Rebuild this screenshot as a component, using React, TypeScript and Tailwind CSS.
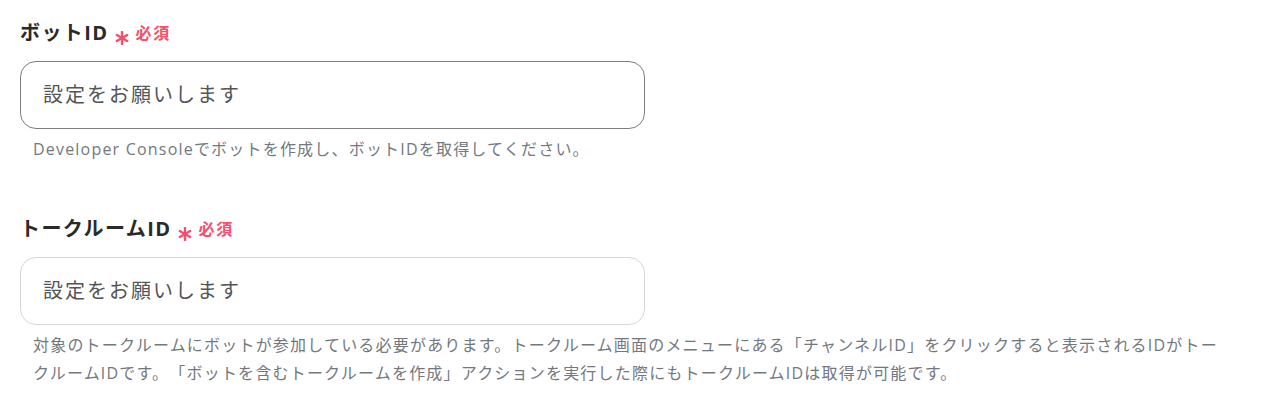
import React from "react";

const fields = [
  {
    id: "bot",
    label: "ボットID",
    active: true,
    help: "Developer Consoleでボットを作成し、ボットIDを取得してください。",
  },
  {
    id: "room",
    label: "トークルームID",
    active: false,
    help: "対象のトークルームにボットが参加している必要があります。トークルーム画面のメニューにある「チャンネルID」をクリックすると表示されるIDがトークルームIDです。「ボットを含むトークルームを作成」アクションを実行した際にもトークルームIDは取得が可能です。",
  },
];

const Asterisk = () => (
  <svg width="14" height="14" viewBox="0 0 14 14" className="mt-[9px] shrink-0">
    <g stroke="#f2506b" strokeWidth="2.4" strokeLinecap="round">
      <line x1="7" y1="1" x2="7" y2="13" />
      <line x1="1.8" y1="4" x2="12.2" y2="10" />
      <line x1="1.8" y1="10" x2="12.2" y2="4" />
    </g>
  </svg>
);

export default function App() {
  return (
    <div className="w-[1281px] h-[418px] bg-white px-5 pt-[18px] font-['Open_Sans','Noto_Sans_CJK_JP',sans-serif] [text-spacing-trim:space-all]">
      {fields.map((f, i) => (
        <section key={f.id} className={i > 0 ? "mt-[51px]" : ""}>
          <div className="h-[30px] flex items-center">
            <span className="text-[20px] font-bold text-[#2a2a2a] leading-none tracking-[0.07em]">
              {f.label}
            </span>
            <span className="ml-[7px]">
              <Asterisk />
            </span>
            <span className="ml-[6px] text-[16px] font-bold text-[#f2506b] leading-none tracking-[0.12em]">
              必須
            </span>
          </div>
          <div
            className={`mt-[13px] w-[625px] h-[68px] rounded-[16px] border flex items-center px-[22px] text-[20px] tracking-[0.1em] text-[#555555] ${
              f.active ? "border-[#7d7d7d]" : "border-[#d4d7dd]"
            }`}
          >
            設定をお願いします
          </div>
          <p className="mt-[6px] pl-[13px] pr-[36px] text-[16px] leading-[28px] tracking-[0.075em] text-[#737880]">
            {f.help}
          </p>
        </section>
      ))}
    </div>
  );
}
